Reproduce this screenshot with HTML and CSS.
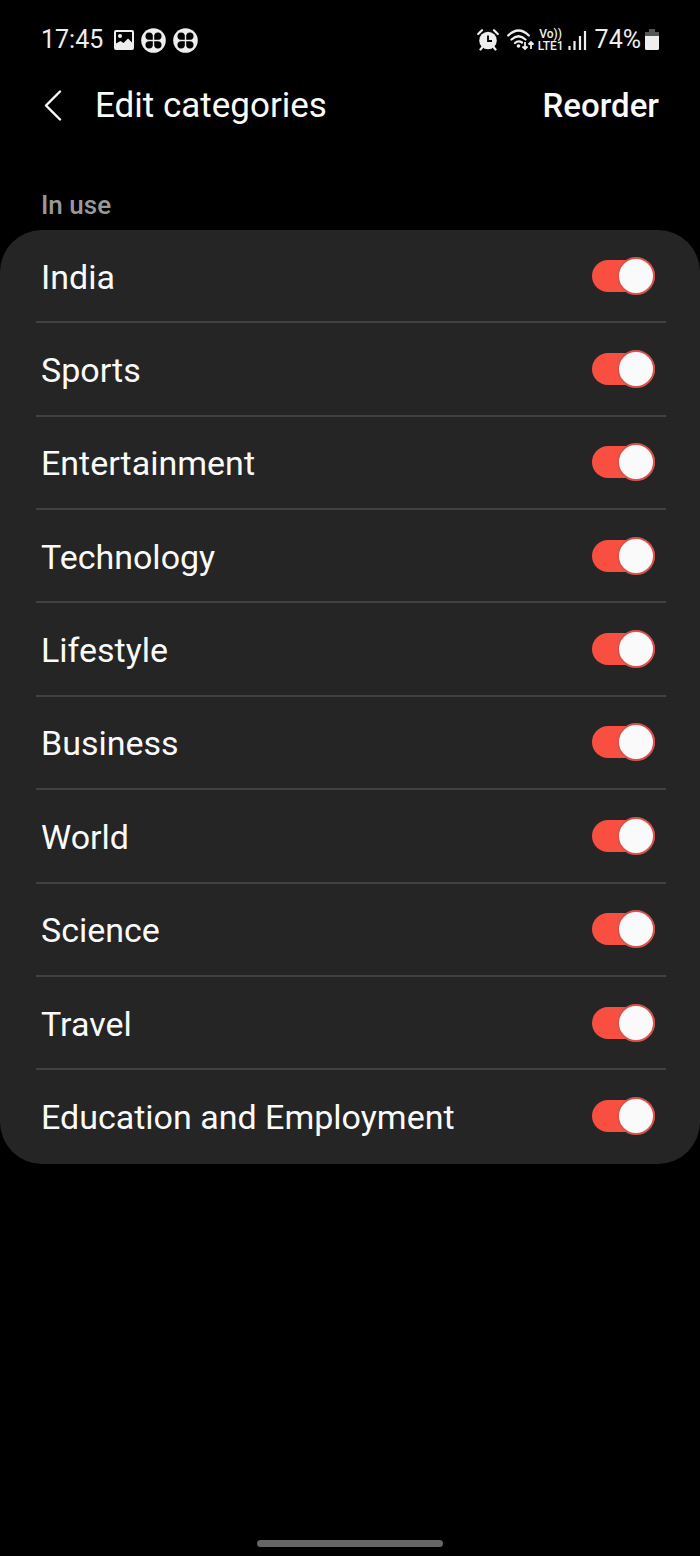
FILE: index.html
```html
<!DOCTYPE html>
<html lang="en">
<head>
<meta charset="utf-8">
<meta name="viewport" content="width=device-width, initial-scale=1">
<title>Edit categories</title>
<link rel="stylesheet" href="styles.css">
</head>
<body>
<div class="screen">
  <div class="status">
    <div class="status-left">
      <span class="clock">17:45</span>
      <svg width="20" height="20" viewBox="0 0 20 20" aria-hidden="true"><path fill="#eee" fill-rule="evenodd" d="M2 0H18A2 2 0 0 1 20 2V18A2 2 0 0 1 18 20H2A2 2 0 0 1 0 18V2A2 2 0 0 1 2 0ZM2 2V13.500L6.500 11L9.500 13L14 8.500L18 12.500V2Z"/><circle cx="6" cy="6" r="2" fill="#eee"/></svg>
      <svg width="25" height="25" viewBox="0 0 25 25" aria-hidden="true"><use href="#clover"/></svg>
      <svg width="25" height="25" viewBox="0 0 25 25" aria-hidden="true"><g id="clover"><circle cx="12.500" cy="12.500" r="12.300" fill="#eee"/><path fill="#000" d="M11.800 11.800H7.500A3.700 3.700 0 1 1 11.800 7.500ZM13.200 11.800V7.500A3.700 3.700 0 1 1 17.500 11.800ZM11.800 13.200V17.500A3.700 3.700 0 1 1 7.500 13.200ZM13.200 13.200H17.500A3.700 3.700 0 1 1 13.200 17.500Z"/></g></svg>
    </div>
    <div class="status-right">
      <svg width="22" height="22" viewBox="0 0 22 22" aria-hidden="true"><circle cx="11" cy="11.500" r="8.800" fill="#eee"/><path d="M11 6.500V12H15" fill="none" stroke="#000" stroke-width="1.800"/><path d="M1.200 5L5 1.200M20.800 5L17 1.200M5.500 18L3.500 20.500M16.500 18L18.500 20.500" fill="none" stroke="#eee" stroke-width="2.200" stroke-linecap="round"/></svg>
      <svg class="wifi" width="27" height="22" viewBox="0 0 27 22" aria-hidden="true"><g fill="none" stroke="#eee" stroke-width="2.200" stroke-linecap="round"><path d="M1.200 6.500Q11.500-3.500 21.800 6.500M4.500 10.500Q11.500 4 18.500 10.500M8 14Q11.500 11 15 13.500"/></g><circle cx="11.500" cy="17" r="1.800" fill="#eee"/><path d="M18 13V20M15.500 17.500L18 20L20.500 17.500M24 20V13M21.500 15.500L24 13L26.500 15.500" fill="none" stroke="#eee" stroke-width="1.800"/></svg>
      <span class="volte"><span>Vo))</span><span>LTE1</span></span>
      <svg width="19" height="20" viewBox="0 0 19 20" aria-hidden="true"><path d="M1.500 16V20M6.500 11V20M12 6V20M17 1V20" stroke="#eee" stroke-width="2.200"/></svg>
      <span class="percent">74%</span>
      <svg width="14" height="22" viewBox="0 0 14 22" aria-hidden="true"><path d="M4 0H10V3H14V8H0V3H4Z" fill="#555"/><path d="M0 7H14V19.500A1.500 1.500 0 0 1 12.500 21H1.500A1.500 1.500 0 0 1 0 19.500Z" fill="#eee"/></svg>
    </div>
  </div>
  <header class="bar">
    <button class="back" type="button" aria-label="Back"><svg width="18" height="32" viewBox="0 0 18 32" aria-hidden="true"><path d="M16 1.500L2 15.500L16 29.500" fill="none" stroke="#fafafa" stroke-width="2.400" stroke-linecap="round" stroke-linejoin="round"/></svg></button>
    <h1 class="title">Edit categories</h1>
    <button class="reorder" type="button">Reorder</button>
  </header>
  <main class="content">
    <h2 class="section">In use</h2>
    <div class="card">
      <label class="row"><span>India</span><input class="switch" type="checkbox" role="switch" checked></label>
      <label class="row"><span>Sports</span><input class="switch" type="checkbox" role="switch" checked></label>
      <label class="row"><span>Entertainment</span><input class="switch" type="checkbox" role="switch" checked></label>
      <label class="row"><span>Technology</span><input class="switch" type="checkbox" role="switch" checked></label>
      <label class="row"><span>Lifestyle</span><input class="switch" type="checkbox" role="switch" checked></label>
      <label class="row"><span>Business</span><input class="switch" type="checkbox" role="switch" checked></label>
      <label class="row"><span>World</span><input class="switch" type="checkbox" role="switch" checked></label>
      <label class="row"><span>Science</span><input class="switch" type="checkbox" role="switch" checked></label>
      <label class="row"><span>Travel</span><input class="switch" type="checkbox" role="switch" checked></label>
      <label class="row"><span>Education and Employment</span><input class="switch" type="checkbox" role="switch" checked></label>
    </div>
  </main>
  <div class="home"></div>
</div>
</body>
</html>
```
FILE: styles.css
```css
*,
*::before {
  box-sizing: border-box;
}

body {
  margin: 0;
  background: #000;
  color: #fafafa;
  font-family: Roboto, "Liberation Sans", sans-serif;
}

.screen {
  display: flex;
  flex-direction: column;
  min-height: 100vh;
}

.status {
  display: flex;
  justify-content: space-between;
  align-items: center;
  height: 64px;
  padding: 16px 41px 0;
  color: #eee;
  font-size: 25px;
  line-height: 32px;
}

.status-left,
.status-right {
  display: flex;
  align-items: center;
  gap: 7px;
}

.clock {
  margin-right: 4px;
}

.status-right {
  gap: 4px;
}

.wifi {
  margin-left: 4px;
}

.volte {
  display: flex;
  flex-direction: column;
  align-items: center;
  font-size: 12px;
  font-weight: 500;
  line-height: 12px;
}

.percent {
  margin-left: 4px;
}

.bar {
  display: flex;
  align-items: center;
  height: 84px;
  padding: 0 41px;
}

.back,
.reorder {
  padding: 0;
  border: 0;
  background: none;
  color: inherit;
  font-family: inherit;
}

.back {
  display: flex;
  width: 54px;
  padding-left: 3px;
}

.title {
  flex: 1;
  margin: 0;
  font-size: 35px;
  font-weight: 400;
  line-height: 40px;
}

.reorder {
  font-size: 33px;
  font-weight: 500;
  line-height: 40px;
}

.content {
  flex: 1;
  padding-top: 40px;
}

.section {
  margin: 0 0 8px;
  padding: 0 41px;
  color: #999;
  font-size: 26px;
  font-weight: 500;
  line-height: 34px;
}

.card {
  display: grid;
  grid-auto-rows: 1fr;
  min-height: 60vh;
  padding: 0 34px 0 36px;
  border-radius: 42px;
  background: #252525;
}

.row {
  display: flex;
  justify-content: space-between;
  align-items: center;
  padding: 0 11px 0 5px;
  border-bottom: 2px solid #414141;
  font-size: 34px;
  line-height: 40px;
}

.row span {
  padding-top: 2px;
}

.row:last-child {
  border-color: transparent;
}

.switch {
  appearance: none;
  flex: none;
  display: flex;
  align-items: center;
  width: 63px;
  height: 32px;
  margin: 0;
  border-radius: 16px;
  background: #555;
}

.switch::before {
  content: "";
  width: 38px;
  height: 38px;
  margin: -3px 0;
  border: 2px solid #777;
  border-radius: 50%;
  background: #fafafa;
}

.switch:checked {
  justify-content: flex-end;
  background: #f84f40;
}

.switch:checked::before {
  border-color: #d9534c;
}

.home {
  align-self: center;
  width: 186px;
  height: 7px;
  margin-bottom: 9px;
  border-radius: 4px;
  background: #666;
}
```
